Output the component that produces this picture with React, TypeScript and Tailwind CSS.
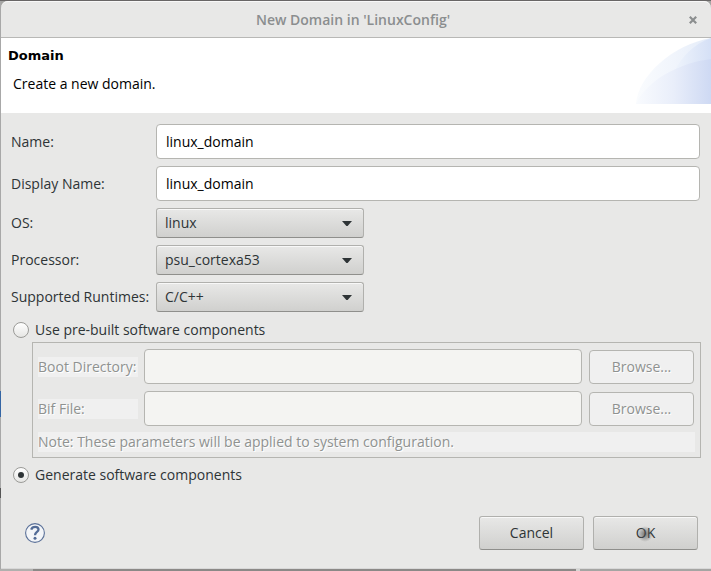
import { useState, type ReactNode } from "react";

const raised =
  "rounded-[3px] border border-[#b0b0ad] border-b-[#8f8f8c] bg-linear-to-b from-[#e8e8e7] to-[#d0d0ce] text-[#2e3436] shadow-[inset_0_1px_0_#f8f8f8]";
const disabledText = "text-[#8f9290] [text-shadow:1px_1px_0_#ffffff]";

function TextRow({ id, label, value }: { id: string; label: string; value: string }) {
  return (
    <>
      <label htmlFor={id}>{label}</label>
      <input
        id={id}
        type="text"
        defaultValue={value}
        className="h-[35px] w-full min-w-0 rounded-[4px] border border-[#b5b5b1] bg-white px-[9px] text-black outline-none"
      />
    </>
  );
}

function SelectRow({ id, label, value }: { id: string; label: string; value: string }) {
  return (
    <>
      <label htmlFor={id}>{label}</label>
      <div className="relative w-[208px]">
        <select
          id={id}
          defaultValue={value}
          className={`block h-[30px] w-full appearance-none pr-8 pl-2 outline-none ${raised}`}
        >
          <option>{value}</option>
        </select>
        <svg
          className="pointer-events-none absolute top-[13px] right-3"
          width="10"
          height="5"
          viewBox="0 0 10 5"
          aria-hidden="true"
        >
          <path d="M0 0H10L5.6 5H4.4Z" fill="#2e3436" />
        </svg>
      </div>
    </>
  );
}

function RadioRow({
  checked,
  onSelect,
  children,
}: {
  checked: boolean;
  onSelect: () => void;
  children: ReactNode;
}) {
  return (
    <label className="flex h-[22px] items-center gap-[6px] pl-[2px]">
      <input
        type="radio"
        name="components"
        checked={checked}
        onChange={onSelect}
        className="grid size-4 shrink-0 appearance-none place-items-center rounded-full border border-[#9b9b98] bg-linear-to-b from-[#ffffff] to-[#e6e6e4] outline-none before:size-[6px] before:rounded-full before:content-[''] checked:before:bg-[#2e3436]"
      />
      {children}
    </label>
  );
}

function FileRow({ id, label }: { id: string; label: string }) {
  return (
    <div className="flex items-center gap-[6px]">
      <label htmlFor={id} className={`h-5 w-[100px] shrink-0 bg-[#f0f0f0] leading-5 ${disabledText}`}>
        {label}
      </label>
      <input
        id={id}
        type="text"
        disabled
        className="h-[35px] min-w-0 flex-1 rounded-[4px] border border-[#b5b5b1] bg-[#f4f4f2]"
      />
      <button
        type="button"
        disabled
        className={`ml-px h-[34px] w-[105px] shrink-0 rounded-[4px] border border-[#b5b5b1] bg-[#f0f0f0] ${disabledText}`}
      >
        Browse...
      </button>
    </div>
  );
}

function BannerArt() {
  return (
    <svg className="h-[66px] w-[75px] shrink-0" viewBox="0 0 75 66" aria-hidden="true">
      <defs>
        <linearGradient id="sweep" x1="0" x2="1">
          <stop offset="0" stopColor="#fafcfe" />
          <stop offset="0.5" stopColor="#f1f5fc" />
          <stop offset="1" stopColor="#e4ecf9" />
        </linearGradient>
        <linearGradient id="flare" x1="0" x2="1">
          <stop offset="0" stopColor="#eff4fc" />
          <stop offset="1" stopColor="#d5e0f6" />
        </linearGradient>
        <linearGradient id="core" x1="0" x2="1">
          <stop offset="0" stopColor="#f9fbfe" />
          <stop offset="0.5" stopColor="#e9eefa" />
          <stop offset="1" stopColor="#ced9f3" />
        </linearGradient>
      </defs>
      <path d="M0 66C2 38 36 7 75 0V66Z" fill="url(#sweep)" />
      <path d="M38 34C46 18 58 6 75 0V24Z" fill="url(#flare)" />
      <path d="M0 66C11 42 43 25 75 21V66Z" fill="url(#core)" />
    </svg>
  );
}

export default function App() {
  const [choice, setChoice] = useState("generate");

  return (
    <div className="flex min-h-screen flex-col bg-[#a5a5a3] font-['Open_Sans','Noto_Sans',sans-serif] text-[14px] leading-5 text-[#2e3436]">
      <div className="flex flex-1 border-t border-[#686666]">
        <div
          className="w-px shrink-0 bg-[linear-gradient(to_bottom,#a8a8a8_390px,#3465a4_390px,#3465a4_416px,#a8a8a8_416px,#a8a8a8_487px,#555555_487px,#555555_497px,#a8a8a8_497px)]"
          aria-hidden="true"
        />
        <main className="flex min-w-0 flex-1 flex-col rounded-t-[7px] border-b border-[#d8d8d8] bg-[#e8e8e7]">
          <header className="flex h-[37px] items-center rounded-t-[7px] border-t border-b border-t-[#f8f8f8] border-b-[#b8b8b6] pr-3 text-[#8b8e8f]">
            <h1 className="flex-1 pl-[18px] text-center font-semibold">New Domain in 'LinuxConfig'</h1>
            <button type="button" aria-label="Close" className="grid size-3 place-items-center">
              <svg width="8" height="8" viewBox="0 0 8 8" aria-hidden="true">
                <path d="M0.8 0.8L7.2 7.2M7.2 0.8L0.8 7.2" stroke="currentColor" strokeWidth="2.2" />
              </svg>
            </button>
          </header>

          <section className="flex h-[75px] justify-between bg-white text-black">
            <div className="pt-2 pl-[7px]">
              <h2 className="font-['DejaVu_Sans',sans-serif] text-[13px] font-bold">Domain</h2>
              <p className="pt-2 pl-[5px]">Create a new domain.</p>
            </div>
            <BannerArt />
          </section>

          <form className="flex flex-1 flex-col pt-[11px] pr-[11px] pl-[10px]" onSubmit={(e) => e.preventDefault()}>
            <div className="grid grid-cols-[145px_1fr] items-center gap-y-[7px]">
              <TextRow id="name" label="Name:" value="linux_domain" />
              <TextRow id="display-name" label="Display Name:" value="linux_domain" />
              <SelectRow id="os" label="OS:" value="linux" />
              <SelectRow id="processor" label="Processor:" value="psu_cortexa53" />
              <SelectRow id="runtimes" label="Supported Runtimes:" value="C/C++" />
            </div>

            <div className="pt-[7px] pb-px">
              <RadioRow checked={choice === "prebuilt"} onSelect={() => setChoice("prebuilt")}>
                Use pre-built software components
              </RadioRow>
            </div>
            <div className="-mr-px ml-[21px] flex flex-col gap-[6px] border border-[#b5b5b1] px-[5px] pt-[6px] pb-[5px]">
              <div className="flex flex-col gap-[7px] pr-px">
                <FileRow id="boot" label="Boot Directory:" />
                <FileRow id="bif" label="Bif File:" />
              </div>
              <p className={`h-5 bg-[#f0f0f0] ${disabledText}`}>
                Note: These parameters will be applied to system configuration.
              </p>
            </div>
            <div className="pt-[6px]">
              <RadioRow checked={choice === "generate"} onSelect={() => setChoice("generate")}>
                Generate software components
              </RadioRow>
            </div>

            <div className="mt-auto flex items-center gap-[9px] pr-[2px] pb-[18px] pl-[14px]">
              <button
                type="button"
                aria-label="Help"
                className="mr-auto grid size-5 place-items-center"
              >
                <svg width="20" height="20" viewBox="0 0 20 20" fill="none" aria-hidden="true">
                  <circle cx="10" cy="10" r="9.4" fill="#f3f5f8" stroke="#5a7098" strokeWidth="1.1" />
                  <path
                    d="M6.2 6.6C6.8 4.8 8.2 3.9 10.2 3.9C12.3 3.9 13.5 5 13.5 6.6C13.5 9 10 9 10 12.2"
                    stroke="#526b96"
                    strokeWidth="2.3"
                  />
                  <circle cx="10" cy="15.2" r="1.5" fill="#526b96" />
                </svg>
              </button>
              <button type="button" className={`h-[34px] w-[105px] ${raised}`}>
                Cancel
              </button>
              <button type="submit" className={`relative h-[34px] w-[105px] ${raised}`}>
                OK
                <span className="absolute top-[9px] left-[43px] size-4 rounded-full bg-[radial-gradient(circle,#444444aa_0%,#66666655_45%,transparent_70%)]" />
              </button>
            </div>
          </form>
        </main>
      </div>
      <div
        className="h-[2px] bg-[linear-gradient(to_right,#b0b0ae_33px,#8b8987_33px,#8b8987_576px,#d5d5d3_576px,#d5d5d3_580px,#a5a5a3_580px)]"
        aria-hidden="true"
      />
    </div>
  );
}
